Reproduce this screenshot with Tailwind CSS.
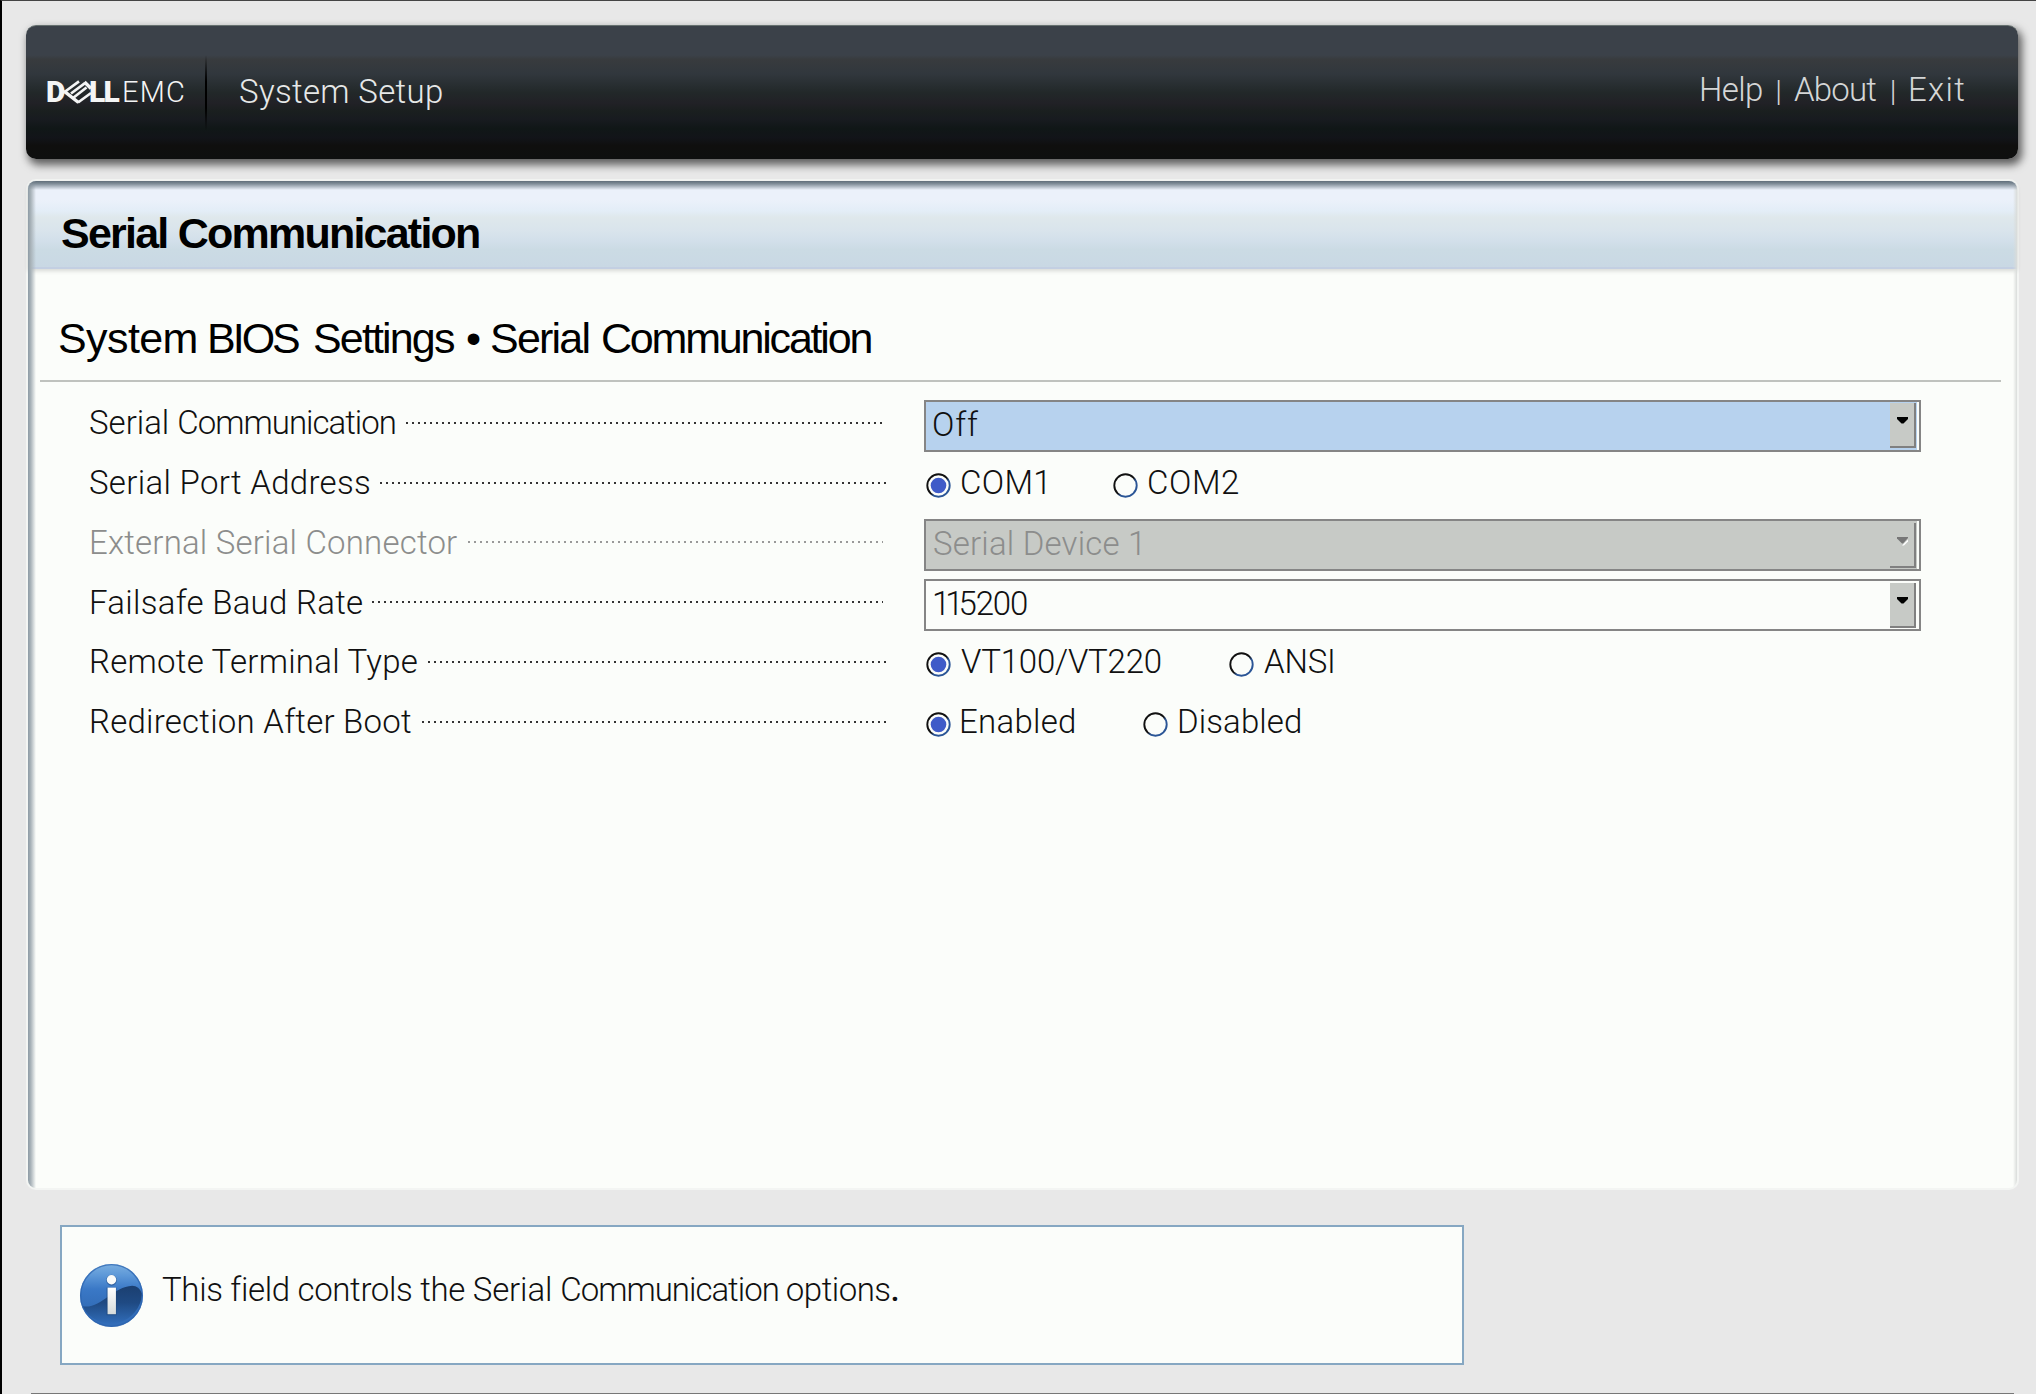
<!DOCTYPE html>
<html lang="en">
<head>
<meta charset="utf-8">
<title>System Setup</title>
<script src="https://cdn.jsdelivr.net/npm/@tailwindcss/browser@4"></script>
</head>
<body class="h-[1394px] w-[2036px] overflow-hidden bg-[#e8e8e8] font-['Roboto',sans-serif] text-[33px] font-light text-[#101010]">
<div class="flex h-full w-full flex-col border-t-[1.5px] border-l-[2px] border-t-[#444] border-l-black pl-[24px]">

  <!-- Header bar -->
  <header class="mt-[24px] flex h-[134px] w-[1992px] shrink-0 items-center rounded-[10px] border-t border-[#66706f] bg-[linear-gradient(180deg,#3b4149_0%,#3b4149_22%,#383b3e_25%,#31373d_36%,#222829_50%,#212126_58%,#1a1f1f_64%,#181b20_70%,#101717_77%,#121419_84%,#0f0f0e_90%,#0e0f0f_100%)] whitespace-nowrap shadow-[3px_5px_8px_1px_rgba(0,0,0,0.6)]">
    <div class="ml-[20px] flex w-[159px] items-center pb-[1px] text-[29px] leading-[40px] text-[#f4f5f5]">
      <span class="w-[17px] font-black text-[30px]">D</span>
      <svg class="h-[24px] w-[29px] shrink-0" viewBox="0 0 29 24" fill="none" stroke="#f4f5f5">
        <path d="M1.500 12 16 1.400M8 13.500 22 3.200M10 18 23.500 7.500M15 22.500 28 13" stroke-width="2.700"/>
        <path d="M1 11 15.500 22.500M21.500 2 28 8.500" stroke-width="3.400"/>
      </svg>
      <span class="-ml-[3px] w-[31px] font-black text-[30px] tracking-[-1.7px]">LL</span>
      <span class="ml-[2px] tracking-[1.2px]">EMC</span>
    </div>
    <div class="h-[76px] w-[2px] bg-[linear-gradient(180deg,transparent,#000_35%,#000_70%,transparent)]"></div>
    <h1 class="ml-[32px] pb-[1px] tracking-[0.33px] text-[#e6e8e8]">System Setup</h1>
    <nav class="ml-auto flex items-center pr-[52px] pb-[5px] text-[#d4d6d6]">
      <a class="w-[64px] tracking-[-0.6px]">Help</a>
      <span class="w-[31px] text-center text-[30px]">|</span>
      <a class="w-[84px] tracking-[-0.8px]">About</a>
      <span class="w-[30px] text-center text-[30px]">|</span>
      <a class="w-[58px] tracking-[1.3px]">Exit</a>
    </nav>
  </header>

  <!-- Settings panel -->
  <main class="relative mt-[22px] ml-[2px] flex h-[1007px] w-[1989px] shrink-0 flex-col rounded-[8px] bg-[#fbfdfa] shadow-[0_0_0_2px_#f3f5f3]">
    <h2 class="h-[88px] shrink-0 rounded-t-[8px] border-b-2 border-[#c3cfe2] bg-[linear-gradient(180deg,#ebf1fa_0%,#ebf1fa_22%,#e3edf7_35%,#dfe8ec_42%,#d9e4ec_58%,#d2dfea_70%,#cbdbe4_80%,#c9d8e4_100%)] pt-[17px] pl-[33px] font-['Liberation_Sans',sans-serif] text-[43px] leading-[70px] font-bold tracking-[-1.77px] whitespace-nowrap text-black shadow-[0_2px_4px_rgba(0,0,0,0.15)]">Serial Communication</h2>
    <h3 class="mr-[16px] ml-[12px] flex h-[113px] shrink-0 border-b-2 border-[#bfc2be] pt-[27px] pl-[18px] font-['Liberation_Sans',sans-serif] text-[43px] leading-[84px] font-normal whitespace-pre text-black"><span class="w-[149px] tracking-[-0.6px]">System </span><span class="w-[106px] tracking-[-3px]">BIOS </span><span class="w-[153px] tracking-[-1.85px]">Settings </span><span class="w-[24px]">• </span><span class="w-[111px] tracking-[-1.8px]">Serial </span><span class="tracking-[-2.2px]">Communication</span></h3>

    <div class="mt-[11px] ml-[61px] flex flex-col whitespace-nowrap">
      <div class="flex h-[59.8px] items-center">
        <div class="flex w-[793px] shrink-0 items-center"><span class="w-[317px] tracking-[-1px]"><span class="tracking-[0px]">Serial </span>Communication</span><i class="h-[2px] w-[476px] bg-[repeating-linear-gradient(90deg,#333_0_2px,transparent_2px_6px)]"></i></div>
        <div class="mt-[6px] ml-[42px] flex h-[52px] w-[997px] items-center border-2 border-[#858585] bg-[#b7d2ee] pl-[6px]">
          <span class="pb-[3px] tracking-[0.85px]">Off</span>
          <div class="mr-[3px] ml-auto flex h-[45px] w-[26px] justify-center border-r-2 border-b-2 border-[#808080] bg-[#c7cac6] pt-[14px]"><svg class="h-[7px] w-[11px]" viewBox="0 0 11 7"><path d="M0 0h11v2L6.500 6.500h-2L0 2z" fill="#000"/></svg></div>
          <div class="-ml-[2px] h-full w-[2px] bg-[#fbfdfa]"></div>
        </div>
      </div>
      <div class="flex h-[59.8px] items-center">
        <div class="flex w-[797px] shrink-0 items-center"><span class="w-[291px] tracking-[0.31px]">Serial Port Address</span><i class="h-[2px] w-[506px] bg-[repeating-linear-gradient(90deg,#333_0_2px,transparent_2px_6px)]"></i></div>
        <div class="ml-[40px] flex items-center">
          <svg class="mt-[5px] h-[25px] w-[25px]" viewBox="0 0 25 25"><use href="#radio-on"/></svg><span class="ml-[9px] w-[153px] tracking-[0.3px]">COM1</span>
          <svg class="mt-[5px] h-[25px] w-[25px]" viewBox="0 0 25 25"><use href="#radio-off"/></svg><span class="ml-[9px] tracking-[0.56px]">COM2</span>
        </div>
      </div>
      <div class="flex h-[59.8px] items-center text-[#8c8d8c]">
        <div class="flex w-[794px] shrink-0 items-center"><span class="w-[379px] tracking-[0.2px]">External Serial Connector</span><i class="h-[2px] w-[415px] bg-[repeating-linear-gradient(90deg,#999_0_2px,transparent_2px_6px)]"></i></div>
        <div class="mt-[6px] ml-[41px] flex h-[52px] w-[997px] items-center border-2 border-[#858585] bg-[#c7cac6] pl-[7px]">
          <span class="pb-[3px] tracking-[0.2px]">Serial Device 1</span>
          <div class="mr-[3px] ml-auto flex h-[45px] w-[26px] justify-center border-r-2 border-b-2 border-[#808080] bg-[#c7cac6] pt-[14px]"><svg class="h-[9px] w-[13px] overflow-visible" viewBox="0 0 13 9"><path d="M6 8.500 12 2.500V4.500L8 8.500z" fill="#fff"/><path d="M1 0h11v1L7 6.500H6L1 1.500z" fill="#777"/></svg></div>
          <div class="-ml-[2px] h-full w-[2px] bg-[#fbfdfa]"></div>
        </div>
      </div>
      <div class="flex h-[59.8px] items-center">
        <div class="flex w-[794px] shrink-0 items-center"><span class="w-[283px] tracking-[0.28px]">Failsafe Baud Rate</span><i class="h-[2px] w-[511px] bg-[repeating-linear-gradient(90deg,#333_0_2px,transparent_2px_6px)]"></i></div>
        <div class="mt-[6px] ml-[41px] flex h-[52px] w-[997px] items-center border-2 border-[#858585] bg-[#fbfdfa] pl-[6px]">
          <span class="pb-[3px]"><span class="tracking-[-5px]">11</span><span class="tracking-[-1.2px]">5200</span></span>
          <div class="mr-[3px] ml-auto flex h-[45px] w-[26px] justify-center border-r-2 border-b-2 border-[#808080] bg-[#c7cac6] pt-[14px]"><svg class="h-[7px] w-[11px]" viewBox="0 0 11 7"><path d="M0 0h11v2L6.500 6.500h-2L0 2z" fill="#000"/></svg></div>
        </div>
      </div>
      <div class="flex h-[59.8px] items-center">
        <div class="flex w-[797px] shrink-0 items-center"><span class="w-[339px] tracking-[0.25px]">Remote Terminal Type</span><i class="h-[2px] w-[458px] bg-[repeating-linear-gradient(90deg,#333_0_2px,transparent_2px_6px)]"></i></div>
        <div class="ml-[40px] flex items-center">
          <svg class="mt-[5px] h-[25px] w-[25px]" viewBox="0 0 25 25"><use href="#radio-on"/></svg><span class="ml-[10px] w-[268px] tracking-[-0.2px]">VT100/VT220</span>
          <svg class="mt-[5px] h-[25px] w-[25px]" viewBox="0 0 25 25"><use href="#radio-off"/></svg><span class="ml-[10px] tracking-[-0.21px]">ANSI</span>
        </div>
      </div>
      <div class="flex h-[59.8px] items-center">
        <div class="flex w-[797px] shrink-0 items-center"><span class="w-[333px] tracking-[0.24px]">Redirection After Boot</span><i class="h-[2px] w-[464px] bg-[repeating-linear-gradient(90deg,#333_0_2px,transparent_2px_6px)]"></i></div>
        <div class="ml-[40px] flex items-center">
          <svg class="mt-[5px] h-[25px] w-[25px]" viewBox="0 0 25 25"><use href="#radio-on"/></svg><span class="ml-[8px] w-[184px] tracking-[0.27px]">Enabled</span>
          <svg class="mt-[5px] h-[25px] w-[25px]" viewBox="0 0 25 25"><use href="#radio-off"/></svg><span class="ml-[9px] tracking-[0.11px]">Disabled</span>
        </div>
      </div>
    </div>
    <!-- Inner bevel over the panel edges -->
    <div class="pointer-events-none absolute inset-0 overflow-hidden rounded-[8px]">
      <div class="absolute inset-y-0 left-0 w-[8px] bg-[linear-gradient(90deg,#8d9ba5,#a9b3b9_35%,transparent)]"></div>
      <div class="absolute inset-y-0 right-0 w-[4px] bg-[linear-gradient(270deg,#d9dcda,transparent)]"></div>
      <div class="absolute inset-x-0 top-0 h-[9px] bg-[linear-gradient(180deg,#5f6d79,#7f8c97_30%,transparent)]"></div>
    </div>
  </main>

  <!-- Help text -->
  <section class="mt-[37px] ml-[34px] flex h-[140px] w-[1404px] shrink-0 items-center border-2 border-[#86a7c2] bg-[#fbfdfa] pl-[17px]">
    <svg class="h-[65px] w-[65px] shrink-0" viewBox="0 0 66 66">
      <defs>
        <linearGradient id="ball" x1="0" y1="0" x2="0" y2="1"><stop offset="0" stop-color="#7aafe0"/><stop offset=".18" stop-color="#5d98d8"/><stop offset=".4" stop-color="#3a78c6"/><stop offset=".7" stop-color="#326db8"/></linearGradient>
        <linearGradient id="wave" x1="0" y1="0" x2="0" y2="1"><stop offset="0" stop-color="#1b3f70"/><stop offset=".45" stop-color="#1f4a83"/><stop offset="1" stop-color="#306cb8"/></linearGradient>
        <linearGradient id="stem" x1="0" y1="0" x2="0" y2="1"><stop offset="0" stop-color="#fff"/><stop offset="1" stop-color="#d6dbdb"/></linearGradient>
      </defs>
      <circle cx="33" cy="33" r="32" fill="url(#ball)"/>
      <path d="M4 44C22 47 34 24 54 23q7 0 10 8a32 32 0 0 1-60 14z" fill="url(#wave)"/>
      <circle cx="33" cy="33" r="31.300" fill="none" stroke="#2b62ae" stroke-width="1.400" opacity=".7"/>
      <circle cx="33" cy="17.500" r="5.500" fill="#1d4477" opacity=".5"/><path d="M28 25h10v28H28z" fill="#1d4477" opacity=".6"/>
      <circle cx="33" cy="17" r="4.800" fill="#fafbfa"/><path d="M29 25h8.500v27H29z" fill="url(#stem)"/>
    </svg>
    <p class="ml-[18px] pb-[11px] whitespace-nowrap"><span class="tracking-[-0.34px]">This field controls the </span><span class="tracking-[-0.1px]">Serial </span><span class="tracking-[-1px]">Communication </span><span class="tracking-[-0.51px]">options<span class="font-medium">.</span></span></p>
  </section>

  <div class="mt-auto ml-[5px] h-[1px] w-[1983px] shrink-0 bg-[#777]"></div>
</div>

<svg class="absolute size-0">
  <defs>
    <linearGradient id="ring" x1="0" y1="0" x2="1" y2="1"><stop offset=".5" stop-color="#111"/><stop offset=".62" stop-color="#2a5596"/></linearGradient>
  </defs>
  <symbol id="radio-off" viewBox="0 0 25 25"><circle cx="12.500" cy="12.500" r="11.200" fill="#fbfdfa" stroke="url(#ring)" stroke-width="1.900"/></symbol>
  <symbol id="radio-on" viewBox="0 0 25 25"><circle cx="12.500" cy="12.500" r="11.200" fill="#fbfdfa" stroke="url(#ring)" stroke-width="1.900"/><circle cx="12.500" cy="12.500" r="7.800" fill="#3f5bc8"/></symbol>
</svg>
</body>
</html>
